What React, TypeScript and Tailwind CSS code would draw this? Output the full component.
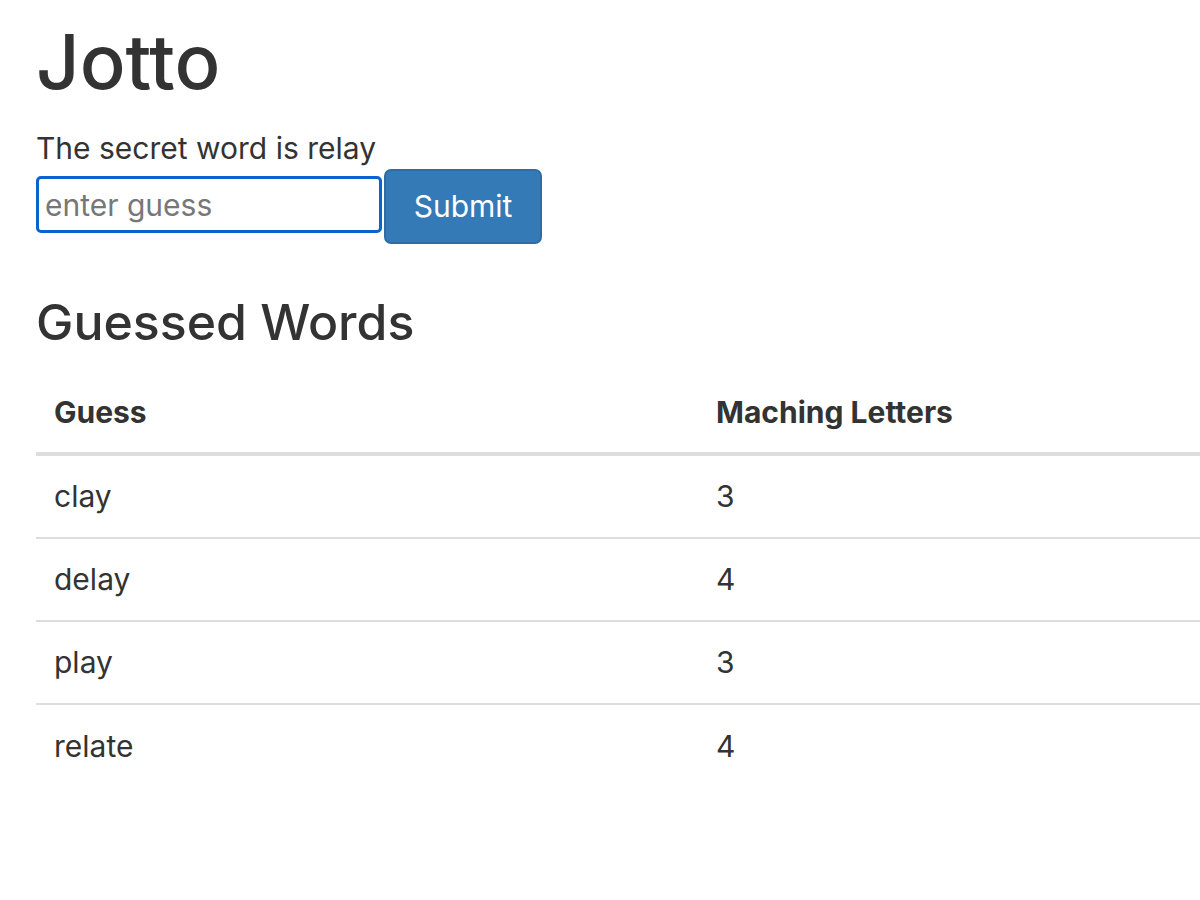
import { useState } from 'react';

const guesses = [
  { word: 'clay', match: 3 },
  { word: 'delay', match: 4 },
  { word: 'play', match: 3 },
  { word: 'relate', match: 4 },
];

export default function App() {
  const [guess, setGuess] = useState('');

  return (
    <div className="min-h-[900px] bg-white pl-[36px] text-[#333] font-['Inter',sans-serif]">
      <h1 className="pt-[16px] text-[76px] leading-[90px] font-medium">Jotto</h1>

      <div className="mt-[24px] text-[30px] leading-[36px]">The secret word is relay</div>

      <form className="mt-[3px] flex items-start" onSubmit={e => e.preventDefault()}>
        <input
          value={guess}
          onChange={e => setGuess(e.target.value)}
          placeholder="enter guess"
          className="mt-[7px] h-[57px] w-[346px] rounded-[5px] border-[3px] border-[#0a63d1] px-[6px] text-[30px] text-[#333] outline-none placeholder:text-[#777]"
        />
        <button className="ml-[2px] h-[75px] w-[158px] rounded-[7px] border-2 border-[#2e6da4] bg-[#337ab7] text-[30px] text-white">
          Submit
        </button>
      </form>

      {/* guessed words table */}
      <h2 className="mt-[46px] text-[50px] leading-[64px] font-medium">Guessed Words</h2>

      <div className="mt-[18px]">
        <div className="grid h-[84px] grid-cols-[680px_1fr] items-center border-b-[4px] border-[#ddd] text-[30px] font-bold">
          <div className="pl-[18px]">Guess</div>
          <div>Maching Letters</div>
        </div>
        {guesses.map(g => (
          <div key={g.word} className="grid h-[83px] grid-cols-[680px_1fr] items-center border-b-2 border-[#ddd] text-[30px] last:border-b-0">
            <div className="pl-[18px]">{g.word}</div>
            <div>{g.match}</div>
          </div>
        ))}
      </div>
    </div>
  );
}
